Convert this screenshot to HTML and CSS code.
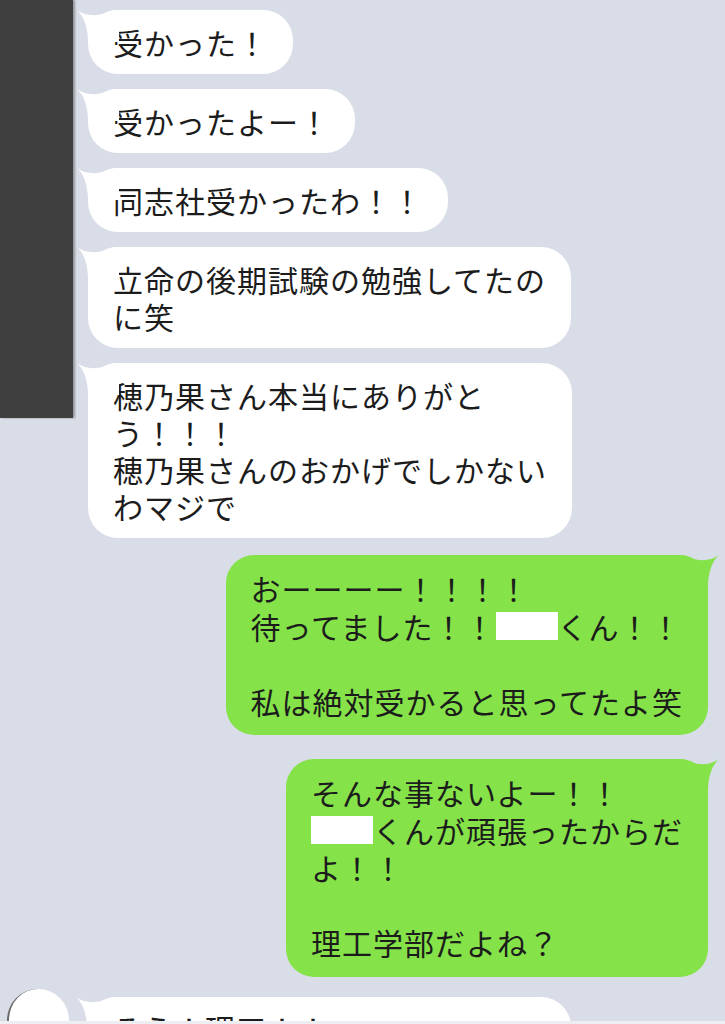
FILE: index.html
```html
<!DOCTYPE html>
<html lang="ja">
  <head>
    <meta charset="UTF-8" />
    <title>トーク</title>
    <link rel="stylesheet" href="styles.css">
  </head>
  <body>
    <div class="screen">
      <!-- blacked out avatar / name -->
      <div class="blackout"></div>

      <div class="talk">
        <div class="row in">
          <div class="bubble">受かった！<svg class="tail" viewBox="0 0 42 32"><path d="M0 0C8 6 20 7 30 2C34 .5 38 0 42 0L42 32L11 32C11 18 7 6 0 0Z"/></svg></div>
        </div>
        <div class="row in">
          <div class="bubble">受かったよー！<svg class="tail" viewBox="0 0 42 32"><path d="M0 0C8 6 20 7 30 2C34 .5 38 0 42 0L42 32L11 32C11 18 7 6 0 0Z"/></svg></div>
        </div>
        <div class="row in">
          <div class="bubble">同志社受かったわ！！<svg class="tail" viewBox="0 0 42 32"><path d="M0 0C8 6 20 7 30 2C34 .5 38 0 42 0L42 32L11 32C11 18 7 6 0 0Z"/></svg></div>
        </div>
        <div class="row in">
          <div class="bubble">立命の後期試験の勉強してたの<br>に笑<svg class="tail" viewBox="0 0 42 32"><path d="M0 0C8 6 20 7 30 2C34 .5 38 0 42 0L42 32L11 32C11 18 7 6 0 0Z"/></svg></div>
        </div>
        <div class="row in">
          <div class="bubble">穂乃果さん本当にありがと<br>う！！！<br>穂乃果さんのおかげでしかない<br>わマジで<svg class="tail" viewBox="0 0 42 32"><path d="M0 0C8 6 20 7 30 2C34 .5 38 0 42 0L42 32L11 32C11 18 7 6 0 0Z"/></svg></div>
        </div>

        <div class="row out first-out">
          <div class="bubble">おーーーー！！！！<br>待ってました！！<span class="redact">〇〇</span>くん！！<br><br>私は絶対受かると思ってたよ笑<svg class="tail" viewBox="0 0 42 32"><path d="M0 0C8 6 20 7 30 2C34 .5 38 0 42 0L42 32L11 32C11 18 7 6 0 0Z"/></svg></div>
        </div>
        <div class="row out second-out">
          <div class="bubble">そんな事ないよー！！<br><span class="redact">〇〇</span>くんが頑張ったからだ<br>よ！！<br><br>理工学部だよね？<svg class="tail" viewBox="0 0 42 32"><path d="M0 0C8 6 20 7 30 2C34 .5 38 0 42 0L42 32L11 32C11 18 7 6 0 0Z"/></svg></div>
        </div>

        <div class="row in with-avatar">
          <div class="avatar"></div>
          <div class="bubble wide">そう！理工！！<svg class="tail" viewBox="0 0 42 32"><path d="M0 0C8 6 20 7 30 2C34 .5 38 0 42 0L42 32L11 32C11 18 7 6 0 0Z"/></svg></div>
        </div>
      </div>
    </div>
  </body>
</html>
```

FILE: styles.css
```css
:root {
  --bg: #d8dde7;
  --mine: #85e249;
  --theirs: #ffffff;
  --ink: #1c1c1c;
}
html {
  background: #eceef2;
}
body {
  margin: 0;
  font-family: "Noto Sans CJK JP", "Noto Sans", sans-serif;
  color: var(--ink);
}
.screen {
  position: relative;
  height: 1021px;
  overflow: hidden;
  background: var(--bg);
}
.blackout {
  position: absolute;
  left: 0;
  top: 0;
  width: 73px;
  height: 418px;
  background: #3f3f40;
  box-shadow: 2px 0 2px rgba(60, 60, 60, 0.45);
  z-index: 2;
}
.talk {
  display: flex;
  flex-direction: column;
  gap: 15px;
  padding-top: 10px;
}
.row {
  display: flex;
}
.row.in {
  padding-left: 88px;
}
.row.out {
  justify-content: flex-end;
  padding-right: 17px;
}
.row.first-out {
  margin-top: 2px;
}
.row.second-out {
  margin-top: 9px;
}
.row.with-avatar {
  padding-left: 7px;
  margin-top: 5px;
  align-items: flex-start;
}
.bubble {
  position: relative;
  padding: 13.5px 25px;
  border-radius: 30px;
  background: var(--theirs);
  font-size: 30px;
  line-height: 37px;
  letter-spacing: 1px;
  white-space: nowrap;
}
.bubble .tail {
  position: absolute;
  left: -11px;
  top: 0;
  width: 42px;
  height: 32px;
  fill: var(--theirs);
}
.out .bubble {
  padding: 15px 25px;
  line-height: 37.5px;
  background: var(--mine);
  border-radius: 28px;
}
.out .bubble .tail {
  left: auto;
  right: -11px;
  fill: var(--mine);
  transform: scaleX(-1);
}
.bubble.wide {
  width: 484px;
  box-sizing: border-box;
}
.avatar {
  width: 62px;
  height: 62px;
  margin-top: -8px;
  margin-right: 18px;
  border-radius: 50%;
  background: #fff;
  border-left: 2px solid #6a6a6a;
  box-sizing: border-box;
}
.redact {
  display: inline-block;
  height: 28px;
  line-height: 28px;
  overflow: hidden;
  vertical-align: -1px;
  background: #fff;
  color: #fff;
}
```
